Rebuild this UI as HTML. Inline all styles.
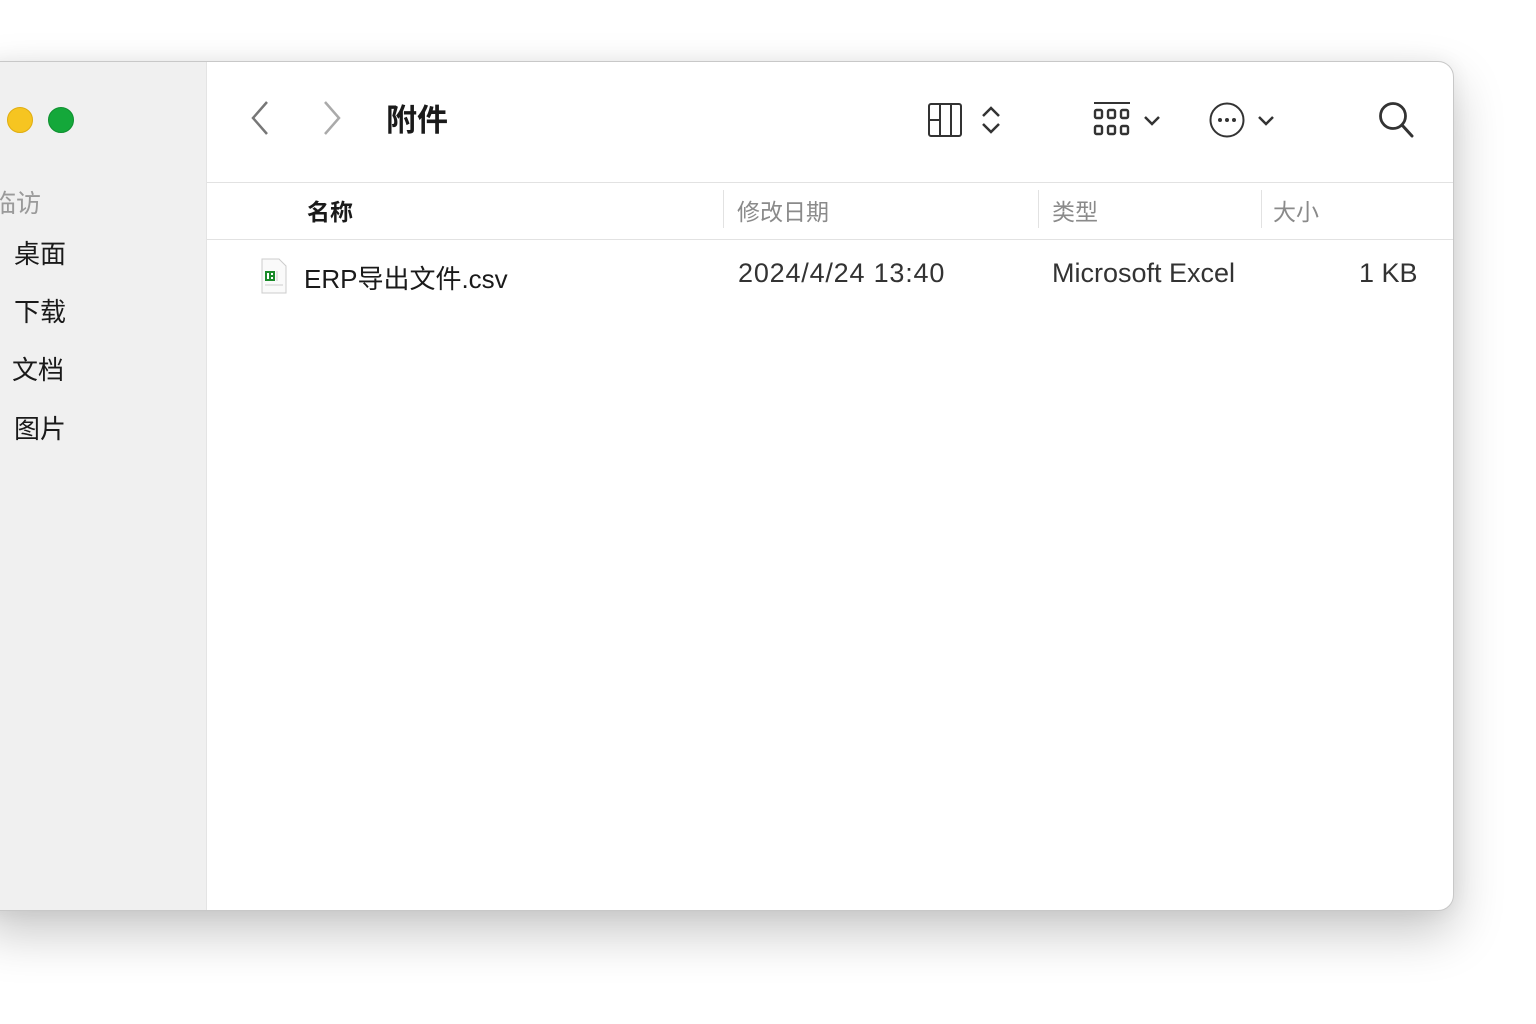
<!DOCTYPE html>
<html><head><meta charset="utf-8"><style>
html,body{margin:0;padding:0;width:1536px;height:1024px;background:#fff;overflow:hidden;font-family:"Liberation Sans","Noto Sans CJK SC",sans-serif;}
.win{position:absolute;left:-20px;top:61px;width:1472px;height:848px;border-radius:16px;background:#fff;border:1px solid #c8c8c8;box-shadow:0 22px 50px rgba(0,0,0,0.22),0 0 20px rgba(0,0,0,0.06);overflow:hidden;}
.side{position:absolute;left:0;top:0;width:225px;height:100%;background:#f0f0f0;border-right:1px solid #e4e4e4;}
.t{position:absolute;white-space:nowrap;}
.dot{position:absolute;width:26px;height:26px;border-radius:50%;}
.hl{position:absolute;left:226px;right:0;height:1px;background:#e2e2e2;}
.vs{position:absolute;top:128px;width:1px;height:38px;background:#e2e2e2;}
</style></head><body>
<div class="win">
 <div class="side">
  <div class="dot" style="left:26px;top:45px;background:#f6c521;border:1px solid #e0ad10;box-sizing:border-box"></div>
  <div class="dot" style="left:67px;top:45px;background:#14a83a;border:1px solid #0f9030;box-sizing:border-box"></div>
  <div class="t" style="left:10px;top:122px;font-size:25px;color:#9a9a9a">临访</div>
  <div class="t" style="left:33px;top:172px;font-size:26px;color:#1a1a1a">桌面</div>
  <div class="t" style="left:33px;top:230px;font-size:26px;color:#1a1a1a">下载</div>
  <div class="t" style="left:31px;top:288px;font-size:26px;color:#1a1a1a">文档</div>
  <div class="t" style="left:33px;top:347px;font-size:26px;color:#1a1a1a">图片</div>
 </div>
 <svg style="position:absolute;left:268px;top:38px" width="24" height="36"><path d="M18 2 L4 18 L18 34" stroke="#777" stroke-width="2.5" fill="none"/></svg>
 <svg style="position:absolute;left:340px;top:38px" width="24" height="36"><path d="M4 2 L18 18 L4 34" stroke="#aaa" stroke-width="2.5" fill="none"/></svg>
 <div class="t" style="left:405px;top:33px;font-size:31px;font-weight:bold;color:#1a1a1a">附件</div>
 <svg style="position:absolute;left:946px;top:40px" width="36" height="36"><rect x="2" y="2" width="32" height="32" rx="2" fill="none" stroke="#333" stroke-width="2"/><path d="M13 2V34M24 2V34M2 18H13" stroke="#333" stroke-width="2"/></svg>
 <svg style="position:absolute;left:1000px;top:43px" width="20" height="30"><path d="M2 11L10 3L18 11M2 19L10 27L18 19" stroke="#333" stroke-width="2.5" fill="none"/></svg>
 <svg style="position:absolute;left:1112px;top:38px" width="40" height="40"><path d="M1 3H37" stroke="#333" stroke-width="2"/><g fill="none" stroke="#333" stroke-width="2.4"><rect x="2" y="10" width="7" height="8" rx="1.5"/><rect x="15" y="10" width="7" height="8" rx="1.5"/><rect x="28" y="10" width="7" height="8" rx="1.5"/><rect x="2" y="26" width="7" height="8" rx="1.5"/><rect x="15" y="26" width="7" height="8" rx="1.5"/><rect x="28" y="26" width="7" height="8" rx="1.5"/></g></svg>
 <svg style="position:absolute;left:1162px;top:52px" width="20" height="14"><path d="M2 3L9 10L16 3" stroke="#333" stroke-width="2.5" fill="none"/></svg>
 <svg style="position:absolute;left:1227px;top:39px" width="38" height="38"><circle cx="19" cy="19" r="16.5" fill="none" stroke="#333" stroke-width="2"/><circle cx="12" cy="19" r="2" fill="#333"/><circle cx="19" cy="19" r="2" fill="#333"/><circle cx="26" cy="19" r="2" fill="#333"/></svg>
 <svg style="position:absolute;left:1276px;top:52px" width="20" height="14"><path d="M2 3L9 10L16 3" stroke="#333" stroke-width="2.5" fill="none"/></svg>
 <svg style="position:absolute;left:1396px;top:38px" width="40" height="42"><circle cx="16" cy="16" r="12.5" fill="none" stroke="#333" stroke-width="2.8"/><path d="M25 25L35 36" stroke="#333" stroke-width="3" stroke-linecap="round"/></svg>
 <div class="hl" style="top:120px"></div>
 <div class="hl" style="top:177px"></div>
 <div class="t" style="left:326px;top:131px;font-size:23px;font-weight:bold;color:#1a1a1a">名称</div>
 <div class="vs" style="left:742px"></div>
 <div class="t" style="left:756px;top:131px;font-size:23px;color:#8a8a8a">修改日期</div>
 <div class="vs" style="left:1057px"></div>
 <div class="t" style="left:1071px;top:131px;font-size:23px;color:#8a8a8a">类型</div>
 <div class="vs" style="left:1280px"></div>
 <div class="t" style="left:1292px;top:131px;font-size:23px;color:#8a8a8a">大小</div>
 <svg style="position:absolute;left:280px;top:196px" width="26" height="36"><path d="M1 1H18L25 8V35H1Z" fill="#fafafa" stroke="#ccc"/><rect x="4" y="13" width="10" height="10" fill="#1a8a2a"/><path d="M6 15h2v6h-2zM10 15h2v2h-2zM10 19h2v2h-2z" fill="#fff"/><path d="M16 13v10M4 27h18" stroke="#ccc"/></svg>
 <div class="t" style="left:323px;top:197px;font-size:26px;color:#1a1a1a">ERP导出文件.csv</div>
 <div class="t" style="left:757px;top:196px;font-size:27px;letter-spacing:0.8px;color:#333">2024/4/24 13:40</div>
 <div class="t" style="left:1071px;top:196px;font-size:27px;color:#333">Microsoft Excel</div>
 <div class="t" style="left:1378px;top:196px;font-size:27px;color:#333">1 KB</div>
</div>
</body></html>
